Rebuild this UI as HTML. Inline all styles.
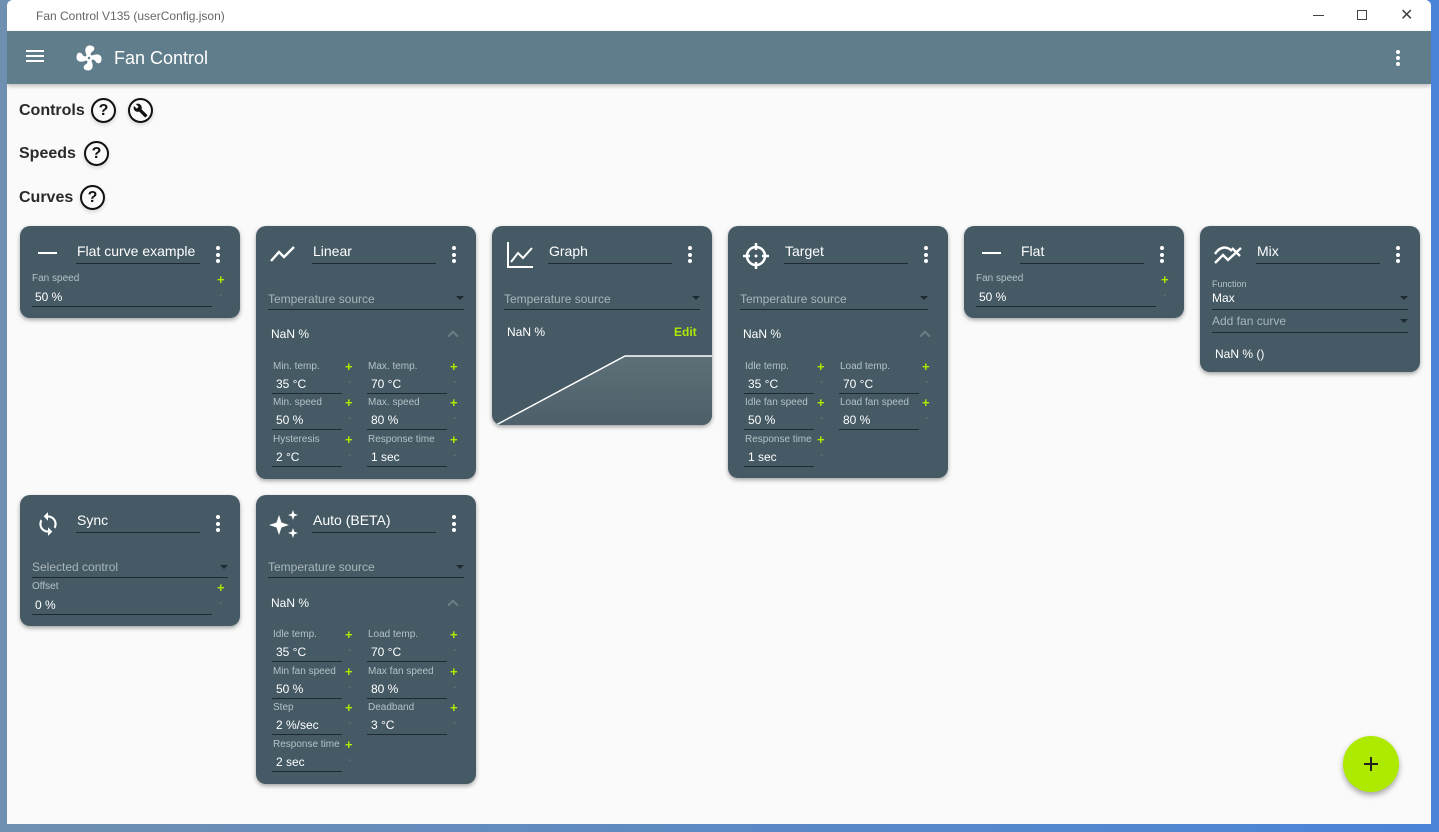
<!DOCTYPE html>
<html><head><meta charset="utf-8"><style>
*{box-sizing:border-box;margin:0;padding:0}
body{width:1439px;height:832px;overflow:hidden;background:linear-gradient(90deg,#6f8fb0,#4a84d8);font-family:"Liberation Sans",sans-serif;position:relative}
.win{position:absolute;left:7px;top:0;width:1424px;height:824px;background:#fafafa;border-radius:6px 6px 0 0;overflow:hidden}
.tb{position:absolute;left:0;top:0;width:100%;height:31px;background:#fff;color:#666;font-size:12px}
.hd{position:absolute;left:0;top:31px;width:100%;height:53px;background:#607d8b;box-shadow:0 2px 4px rgba(0,0,0,.25);color:#fff}
.a{position:absolute}
.sec{position:absolute;left:12px;font-size:16px;font-weight:bold;color:#2a2a2a}
.q{position:absolute;width:25px;height:25px;border:2px solid #111;border-radius:50%;font-size:16px;font-weight:bold;text-align:center;line-height:21px;color:#111;box-shadow:0 2px 4px rgba(0,0,0,.15)}
.card{position:absolute;width:220px;background:#455a64;border-radius:10px;box-shadow:0 2px 4px rgba(0,0,0,.35);color:#fff;overflow:hidden}
.card .a{white-space:nowrap}
.t{font-size:14px;top:17px;left:57px}
.tu{top:37px;left:56px;width:124px;height:1px;background:#1e2a30}
.dots{left:196px;top:20px;width:4px}
.dots i{display:block;width:4px;height:4px;border-radius:50%;background:#fff;margin-bottom:2.5px}
.lbl{font-size:10px;color:#b5c2c8}
.val{font-size:12px;color:#fff}
.ul{height:1px;background:#1e2a30}
.pl{color:#aeea00;font-weight:bold;font-size:13px}
.mi{color:#6c7e86;font-size:10px}
.ph{font-size:12px;color:#a9b6bc}
.car{width:0;height:0;border-left:4px solid transparent;border-right:4px solid transparent;border-top:4px solid #1e2a30}
.chev{width:8px;height:8px;border-left:2px solid #6c7e86;border-top:2px solid #6c7e86;transform:rotate(45deg)}
.nan{font-size:12px;color:#fff}
</style></head><body>
<div class="win">
<div class="tb"><span class="a" style="left:29px;top:9px">Fan Control V135 (userConfig.json)</span>
<span class="a" style="left:1306px;top:15px;width:11px;height:1px;background:#444"></span>
<span class="a" style="left:1350px;top:10px;width:10px;height:10px;border:1px solid #444"></span>
<span class="a" style="left:1393px;top:5px;font-size:16px;color:#444">✕</span></div>
<div class="hd">
<div class="a" style="left:19px;top:19px;width:18px;height:2px;background:#fff;box-shadow:0 5px 0 #fff,0 10px 0 #fff"></div>
<svg class="a" style="left:67px;top:12px" width="30" height="30" viewBox="0 0 24 24"><path fill="#fff" d="M12 11a1 1 0 1 0 0 2 1 1 0 0 0 0-2m.5-9c4.5 0 4.61 3.570 2.25 4.75-.99.49-1.43 1.54-1.62 2.47.48.2.9.51 1.220.91 3.7-2 7.68-1.21 7.68 2.37 0 4.5-3.57 4.6-4.75 2.23-.5-.99-1.56-1.43-2.49-1.62-.2.48-.51.89-.91 1.23 1.99 3.69 1.2 7.66-2.38 7.66-4.5 0-4.59-3.58-2.23-4.76.98-.49 1.42-1.53 1.62-2.45-.49-.2-.92-.52-1.24-.92C5.96 15.85 2 15.07 2 11.5 2 7 5.56 6.89 6.74 9.26c.5.99 1.55 1.42 2.48 1.61.19-.48.51-.9.92-1.22C8.15 5.96 8.94 2 12.5 2"/></svg>
<span class="a" style="left:107px;top:17px;font-size:18px">Fan Control</span>
<div class="a" style="left:1389px;top:19px;width:4px"><i style="display:block;width:4px;height:4px;border-radius:50%;background:#fff;margin-bottom:2px"></i><i style="display:block;width:4px;height:4px;border-radius:50%;background:#fff;margin-bottom:2px"></i><i style="display:block;width:4px;height:4px;border-radius:50%;background:#fff"></i></div>
</div>
<div class="sec" style="top:102px">Controls</div><div class="q" style="left:84px;top:98px">?</div>
<div class="q" style="left:121px;top:98px"><svg style="position:absolute;left:3px;top:3px" width="15" height="15" viewBox="0 0 24 24"><path fill="#111" d="M22.7 19l-9.1-9.1c.9-2.3.4-5-1.5-6.9-2-2-5-2.4-7.4-1.3L9 6 6 9 1.6 4.7C.4 7.100.9 10.100 2.900 12.100c1.900 1.900 4.600 2.400 6.900 1.500l9.100 9.100c.4.4 1 .4 1.400 0l2.300-2.300c.5-.4.5-1.100.1-1.400z"/></svg></div>
<div class="sec" style="top:145px">Speeds</div><div class="q" style="left:77px;top:141px">?</div>
<div class="sec" style="top:189px">Curves</div><div class="q" style="left:73px;top:185px">?</div>
</div>

<!-- Flat curve example -->
<div class="card" style="left:20px;top:226px;height:92px">
<div class="a" style="left:18px;top:26px;width:19px;height:2px;background:#fff"></div>
<div class="a t">Flat curve example</div><div class="a tu"></div>
<div class="a dots"><i></i><i></i><i></i></div>
<div class="a lbl" style="left:12px;top:47px">Fan speed</div>
<div class="a pl" style="left:197px;top:46px">+</div><div class="a mi" style="left:199px;top:64px">-</div>
<div class="a val" style="left:15px;top:64px">50 %</div><div class="a ul" style="left:12px;top:80px;width:180px"></div>
</div>

<!-- Linear -->
<div class="card" style="left:256px;top:226px;height:253px">
<svg class="a" style="left:14px;top:18px" width="28" height="20" viewBox="0 0 28 20"><path d="M1 17l8-9 5 5 10-10" stroke="#fff" stroke-width="2.4" fill="none"/></svg>
<div class="a t">Linear</div><div class="a tu"></div>
<div class="a dots"><i></i><i></i><i></i></div>
<div class="a ph" style="left:12px;top:66px">Temperature source</div><div class="a car" style="left:200px;top:70px"></div>
<div class="a ul" style="left:12px;top:83px;width:196px"></div>
<div class="a nan" style="left:15px;top:101px">NaN %</div><div class="a chev" style="left:193px;top:106px"></div>
<div class="a lbl" style="left:17px;top:135px">Min. temp.</div><div class="a pl" style="left:89px;top:133px">+</div><div class="a val" style="left:20px;top:151px">35 °C</div><div class="a mi" style="left:92px;top:151px">-</div><div class="a ul" style="left:16px;top:167px;width:70px"></div>
<div class="a lbl" style="left:112px;top:135px">Max. temp.</div><div class="a pl" style="left:194px;top:133px">+</div><div class="a val" style="left:115px;top:151px">70 °C</div><div class="a mi" style="left:197px;top:151px">-</div><div class="a ul" style="left:111px;top:167px;width:80px"></div>
<div class="a lbl" style="left:17px;top:171px">Min. speed</div><div class="a pl" style="left:89px;top:169px">+</div><div class="a val" style="left:20px;top:187px">50 %</div><div class="a mi" style="left:92px;top:187px">-</div><div class="a ul" style="left:16px;top:203px;width:70px"></div>
<div class="a lbl" style="left:112px;top:171px">Max. speed</div><div class="a pl" style="left:194px;top:169px">+</div><div class="a val" style="left:115px;top:187px">80 %</div><div class="a mi" style="left:197px;top:187px">-</div><div class="a ul" style="left:111px;top:203px;width:80px"></div>
<div class="a lbl" style="left:17px;top:208px">Hysteresis</div><div class="a pl" style="left:89px;top:206px">+</div><div class="a val" style="left:20px;top:224px">2 °C</div><div class="a mi" style="left:92px;top:224px">-</div><div class="a ul" style="left:16px;top:240px;width:70px"></div>
<div class="a lbl" style="left:112px;top:208px">Response time</div><div class="a pl" style="left:194px;top:206px">+</div><div class="a val" style="left:115px;top:224px">1 sec</div><div class="a mi" style="left:197px;top:224px">-</div><div class="a ul" style="left:111px;top:240px;width:80px"></div>
</div>

<!-- Graph -->
<div class="card" style="left:492px;top:226px;height:199px">
<svg class="a" style="left:14px;top:15px" width="28" height="28" viewBox="0 0 28 28"><path d="M2 1v25h25" stroke="#fff" stroke-width="2" fill="none"/><path d="M5 21l7-9 5 5 9-10" stroke="#fff" stroke-width="2" fill="none"/></svg>
<div class="a t">Graph</div><div class="a tu"></div>
<div class="a dots"><i></i><i></i><i></i></div>
<div class="a ph" style="left:12px;top:66px">Temperature source</div><div class="a car" style="left:200px;top:70px"></div>
<div class="a ul" style="left:12px;top:83px;width:196px"></div>
<div class="a nan" style="left:15px;top:99px">NaN %</div>
<div class="a" style="left:182px;top:99px;font-size:12px;font-weight:bold;color:#aeea00">Edit</div>
<svg class="a" style="left:0;top:0" width="220" height="199"><defs><linearGradient id="g" x1="0" y1="0" x2="0" y2="1"><stop offset="0" stop-color="#5d6f77"/><stop offset="1" stop-color="#4d6069"/></linearGradient></defs><polygon points="4,199 133,130 220,130 220,199" fill="url(#g)"/><polyline points="4,199 133,130 220,130" stroke="#fff" stroke-width="1.5" fill="none"/></svg>
</div>

<!-- Target -->
<div class="card" style="left:728px;top:226px;height:252px">
<svg class="a" style="left:13px;top:15px" width="30" height="30" viewBox="0 0 30 30"><circle cx="15" cy="15" r="9" stroke="#fff" stroke-width="2.5" fill="none"/><circle cx="15" cy="15" r="1.5" fill="#fff"/><path d="M15 2v7M15 21v7M2 15h7M21 15h7" stroke="#fff" stroke-width="2.5"/></svg>
<div class="a t">Target</div><div class="a tu"></div>
<div class="a dots"><i></i><i></i><i></i></div>
<div class="a ph" style="left:12px;top:66px">Temperature source</div><div class="a car" style="left:192px;top:70px"></div>
<div class="a ul" style="left:12px;top:83px;width:188px"></div>
<div class="a nan" style="left:15px;top:101px">NaN %</div><div class="a chev" style="left:193px;top:106px"></div>
<div class="a lbl" style="left:17px;top:135px">Idle temp.</div><div class="a pl" style="left:89px;top:133px">+</div><div class="a val" style="left:20px;top:151px">35 °C</div><div class="a mi" style="left:92px;top:151px">-</div><div class="a ul" style="left:16px;top:167px;width:70px"></div>
<div class="a lbl" style="left:112px;top:135px">Load temp.</div><div class="a pl" style="left:194px;top:133px">+</div><div class="a val" style="left:115px;top:151px">70 °C</div><div class="a mi" style="left:197px;top:151px">-</div><div class="a ul" style="left:111px;top:167px;width:80px"></div>
<div class="a lbl" style="left:17px;top:171px">Idle fan speed</div><div class="a pl" style="left:89px;top:169px">+</div><div class="a val" style="left:20px;top:187px">50 %</div><div class="a mi" style="left:92px;top:187px">-</div><div class="a ul" style="left:16px;top:203px;width:70px"></div>
<div class="a lbl" style="left:112px;top:171px">Load fan speed</div><div class="a pl" style="left:194px;top:169px">+</div><div class="a val" style="left:115px;top:187px">80 %</div><div class="a mi" style="left:197px;top:187px">-</div><div class="a ul" style="left:111px;top:203px;width:80px"></div>
<div class="a lbl" style="left:17px;top:208px">Response time</div><div class="a pl" style="left:89px;top:206px">+</div><div class="a val" style="left:20px;top:224px">1 sec</div><div class="a mi" style="left:92px;top:224px">-</div><div class="a ul" style="left:16px;top:240px;width:70px"></div>
</div>

<!-- Flat -->
<div class="card" style="left:964px;top:226px;height:92px">
<div class="a" style="left:18px;top:26px;width:19px;height:2px;background:#fff"></div>
<div class="a t">Flat</div><div class="a tu"></div>
<div class="a dots"><i></i><i></i><i></i></div>
<div class="a lbl" style="left:12px;top:47px">Fan speed</div>
<div class="a pl" style="left:197px;top:46px">+</div><div class="a mi" style="left:199px;top:64px">-</div>
<div class="a val" style="left:15px;top:64px">50 %</div><div class="a ul" style="left:12px;top:80px;width:180px"></div>
</div>

<!-- Mix -->
<div class="card" style="left:1200px;top:226px;height:146px">
<svg class="a" style="left:13px;top:17px" width="30" height="22" viewBox="0 0 30 22"><path d="M2 11c5-8 12-8 17-3M2 20l8-8 5 5 13-12M19 5l8 8" stroke="#fff" stroke-width="2.4" fill="none"/></svg>
<div class="a t">Mix</div><div class="a tu"></div>
<div class="a dots"><i></i><i></i><i></i></div>
<div class="a lbl" style="left:12px;top:53px;font-size:9px">Function</div>
<div class="a val" style="left:12px;top:65px">Max</div><div class="a car" style="left:200px;top:70px"></div>
<div class="a ul" style="left:12px;top:83px;width:196px"></div>
<div class="a ph" style="left:12px;top:88px">Add fan curve</div><div class="a car" style="left:200px;top:93px"></div>
<div class="a ul" style="left:12px;top:106px;width:196px"></div>
<div class="a nan" style="left:15px;top:121px">NaN % ()</div>
</div>

<!-- Sync -->
<div class="card" style="left:20px;top:495px;height:131px">
<svg class="a" style="left:15px;top:14px" width="26" height="30" viewBox="0 0 24 24"><path fill="#fff" d="M12 4V1L8 5l4 4V6c3.31 0 6 2.69 6 6 0 1.01-.25 1.97-.7 2.8l1.46 1.46A7.930 7.930 0 0 0 20 12c0-4.42-3.58-8-8-8m0 14c-3.31 0-6-2.69-6-6 0-1.01.25-1.97.7-2.8L5.24 7.74A7.930 7.930 0 0 0 4 12c0 4.42 3.58 8 8 8v3l4-4-4-4z"/></svg>
<div class="a t">Sync</div><div class="a tu"></div>
<div class="a dots"><i></i><i></i><i></i></div>
<div class="a ph" style="left:12px;top:65px">Selected control</div><div class="a car" style="left:200px;top:70px"></div>
<div class="a ul" style="left:12px;top:82px;width:196px"></div>
<div class="a lbl" style="left:12px;top:86px">Offset</div>
<div class="a pl" style="left:197px;top:85px">+</div><div class="a mi" style="left:199px;top:103px">-</div>
<div class="a val" style="left:15px;top:103px">0 %</div><div class="a ul" style="left:12px;top:119px;width:180px"></div>
</div>

<!-- Auto -->
<div class="card" style="left:256px;top:495px;height:289px">
<svg class="a" style="left:13px;top:14px" width="32" height="30" viewBox="0 0 32 30"><path fill="#fff" d="M10 6l2.5 7.5L20 16l-7.5 2.5L10 26l-2.5-7.5L0 16l7.5-2.5z M24 1l1.3 3.7L29 6l-3.7 1.3L24 11l-1.3-3.7L19 6l3.7-1.3z M24 19l1.3 3.7L29 24l-3.7 1.3L24 29l-1.3-3.7L19 24l3.7-1.3z"/></svg>
<div class="a t">Auto (BETA)</div><div class="a tu"></div>
<div class="a dots"><i></i><i></i><i></i></div>
<div class="a ph" style="left:12px;top:65px">Temperature source</div><div class="a car" style="left:200px;top:70px"></div>
<div class="a ul" style="left:12px;top:82px;width:196px"></div>
<div class="a nan" style="left:15px;top:101px">NaN %</div><div class="a chev" style="left:193px;top:106px"></div>
<div class="a lbl" style="left:17px;top:134px">Idle temp.</div><div class="a pl" style="left:89px;top:132px">+</div><div class="a val" style="left:20px;top:150px">35 °C</div><div class="a mi" style="left:92px;top:150px">-</div><div class="a ul" style="left:16px;top:166px;width:70px"></div>
<div class="a lbl" style="left:112px;top:134px">Load temp.</div><div class="a pl" style="left:194px;top:132px">+</div><div class="a val" style="left:115px;top:150px">70 °C</div><div class="a mi" style="left:197px;top:150px">-</div><div class="a ul" style="left:111px;top:166px;width:80px"></div>
<div class="a lbl" style="left:17px;top:171px">Min fan speed</div><div class="a pl" style="left:89px;top:169px">+</div><div class="a val" style="left:20px;top:187px">50 %</div><div class="a mi" style="left:92px;top:187px">-</div><div class="a ul" style="left:16px;top:203px;width:70px"></div>
<div class="a lbl" style="left:112px;top:171px">Max fan speed</div><div class="a pl" style="left:194px;top:169px">+</div><div class="a val" style="left:115px;top:187px">80 %</div><div class="a mi" style="left:197px;top:187px">-</div><div class="a ul" style="left:111px;top:203px;width:80px"></div>
<div class="a lbl" style="left:17px;top:207px">Step</div><div class="a pl" style="left:89px;top:205px">+</div><div class="a val" style="left:20px;top:223px">2 %/sec</div><div class="a mi" style="left:92px;top:223px">-</div><div class="a ul" style="left:16px;top:239px;width:70px"></div>
<div class="a lbl" style="left:112px;top:207px">Deadband</div><div class="a pl" style="left:194px;top:205px">+</div><div class="a val" style="left:115px;top:223px">3 °C</div><div class="a mi" style="left:197px;top:223px">-</div><div class="a ul" style="left:111px;top:239px;width:80px"></div>
<div class="a lbl" style="left:17px;top:244px">Response time</div><div class="a pl" style="left:89px;top:242px">+</div><div class="a val" style="left:20px;top:260px">2 sec</div><div class="a mi" style="left:92px;top:260px">-</div><div class="a ul" style="left:16px;top:276px;width:70px"></div>
</div>

<div class="a" style="left:1343px;top:736px;width:56px;height:56px;border-radius:50%;background:#aeea00;box-shadow:0 3px 6px rgba(0,0,0,.35)">
<div class="a" style="left:21px;top:27px;width:14px;height:2px;background:#222"></div><div class="a" style="left:27px;top:21px;width:2px;height:14px;background:#222"></div></div>
</body></html>
